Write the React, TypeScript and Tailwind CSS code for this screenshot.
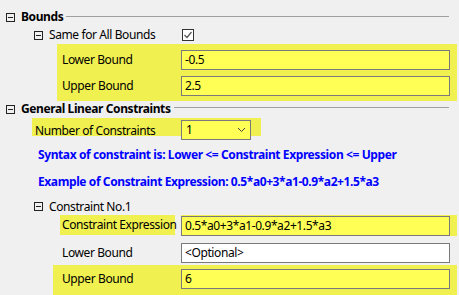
import React from "react";

const Minus = () => (
  <div className="w-[9px] h-[9px] border border-[#222] bg-[#f0f0f0] flex items-center justify-center shrink-0">
    <div className="w-[5px] h-[1px] bg-[#222]" />
  </div>
);

const Input = ({ value, white }: { value: string; white?: boolean }) => (
  <div
    className={`w-[269px] h-[20px] shrink-0 border border-[#7a7a7a] flex items-center pl-[3px] whitespace-nowrap ${
      white ? "bg-white" : "bg-[#ffff55]"
    }`}
  >
    {value}
  </div>
);

export default function App() {
  return (
    <div
      className="w-[459px] h-[295px] bg-[#f0f0f0] overflow-hidden text-[12px] text-black leading-none flex flex-col whitespace-nowrap tracking-[-0.4px]"
      style={{ fontFamily: '"Noto Sans", sans-serif' }}
    >
      {/* Bounds header */}
      <div className="h-[17px] mt-[9px] flex items-center pl-[6px] pr-[10px]">
        <Minus />
        <span className="ml-[6px] font-bold">Bounds</span>
        <div className="ml-[3px] flex-1 h-[1px] bg-[#a0a0a0] -mt-[1px]" />
      </div>
      {/* Same for all bounds */}
      <div className="h-[19px] flex items-center pl-[34px]">
        <Minus />
        <span className="ml-[6px] w-[133px]">Same for All Bounds</span>
        <div className="w-[12px] h-[12px] border border-[#333] bg-white flex items-center justify-center">
          <svg width="10" height="10" viewBox="0 0 10 10">
            <path d="M1.5 5 L4 7.5 L8.5 2" stroke="#555" strokeWidth="1.2" fill="none" />
          </svg>
        </div>
      </div>
      {/* Highlight block */}
      <div className="ml-[57px] w-[400px] h-[58px] bg-[#f0f050] flex flex-col pt-[6px] gap-[6px]">
        <div className="flex items-center h-[20px]">
          <span className="pl-[5px] w-[124px]">Lower Bound</span>
          <Input value="-0.5" />
        </div>
        <div className="flex items-center h-[20px]">
          <span className="pl-[5px] w-[124px]">Upper Bound</span>
          <Input value="2.5" />
        </div>
      </div>
      {/* GLC header */}
      <div className="h-[16px] flex items-center pl-[6px] pr-[10px]">
        <Minus />
        <span className="ml-[6px] font-bold">General Linear Constraints</span>
        <div className="ml-[3px] flex-1 h-[1px] bg-[#a0a0a0] -mt-[3px]" />
      </div>
      {/* Number of constraints */}
      <div className="mt-[1px] ml-[32px] w-[229px] h-[18px] bg-[#f0f050] flex items-start">
        <span className="pl-[3px] w-[149px] mt-[7px]">Number of Constraints</span>
        <div className="mt-[2px] w-[70px] h-[20px] shrink-0 border border-[#7a7a7a] bg-[#ffff55] flex items-center pl-[4px] pr-[4px]">
          <span className="flex-1">1</span>
          <svg width="9" height="6" viewBox="0 0 9 6">
            <path d="M1 1 L4.5 4.5 L8 1" stroke="#444" strokeWidth="1" fill="none" />
          </svg>
        </div>
      </div>
      {/* Blue text */}
      <div className="mt-[12px] pl-[38px] h-[14px] flex items-center font-bold text-[#0000ff]">
        Syntax of constraint is: Lower &lt;= Constraint Expression &lt;= Upper
      </div>
      <div className="mt-[13px] pl-[38px] h-[14px] flex items-center font-bold text-[#0000ff]">
        Example of Constraint Expression: 0.5*a0+3*a1-0.9*a2+1.5*a3
      </div>
      {/* Constraint No.1 */}
      <div className="mt-[10px] h-[16px] flex items-center pl-[34px]">
        <Minus />
        <span className="ml-[6px]">Constraint No.1</span>
      </div>
      {/* Constraint expression */}
      <div className="mt-[1px] h-[21px] flex items-start">
        <div className="ml-[60px] w-[115px] h-[20px] bg-[#f0f050] flex items-center pl-[2px]">
          Constraint Expression
        </div>
        <div className="ml-[6px] w-[276px] h-[21px] bg-[#f0f050]">
          <div className="mt-[1px]">
            <Input value="0.5*a0+3*a1-0.9*a2+1.5*a3" />
          </div>
        </div>
      </div>
      {/* Lower bound */}
      <div className="mt-[7px] h-[20px] flex items-center">
        <span className="pl-[62px] w-[181px]">Lower Bound</span>
        <Input value="<Optional>" white />
      </div>
      {/* Upper bound */}
      <div className="mt-[2px] ml-[53px] w-[404px] h-[30px] bg-[#f0f050] flex items-start pt-[4px]">
        <span className="pl-[9px] w-[128px] h-[20px] flex items-center">Upper Bound</span>
        <Input value="6" />
      </div>
    </div>
  );
}
